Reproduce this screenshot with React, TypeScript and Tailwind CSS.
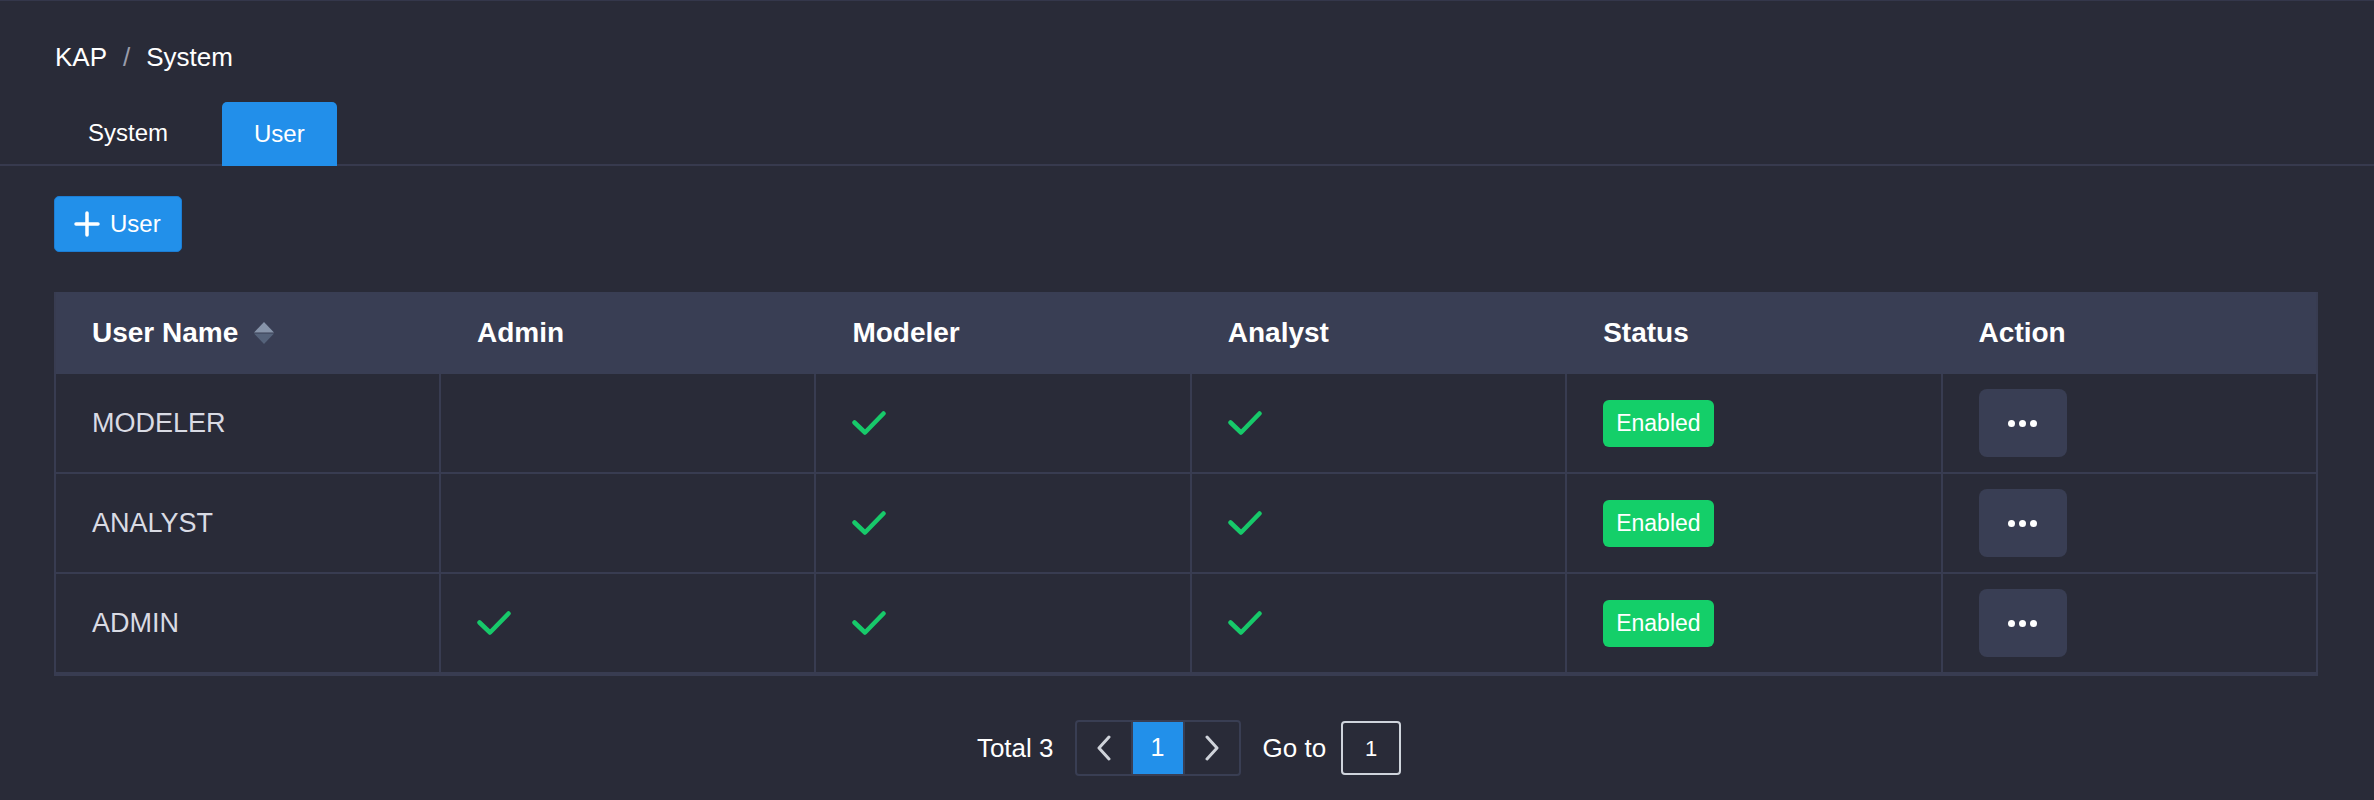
import React from "react";

const users = [
  { name: "MODELER", admin: false, modeler: true, analyst: true },
  { name: "ANALYST", admin: false, modeler: true, analyst: true },
  { name: "ADMIN", admin: true, modeler: true, analyst: true },
];

const columns = ["User Name", "Admin", "Modeler", "Analyst", "Status", "Action"];

const Check = () => (
  <svg width="34" height="24" viewBox="0 0 34 24" fill="none">
    <path
      d="M2.5 11.5 L13 21.5 L31.5 2.5"
      stroke="#17c96a"
      strokeWidth="4.5"
      strokeLinecap="round"
      strokeLinejoin="round"
    />
  </svg>
);

const SortIcon = () => (
  <svg width="20" height="22" viewBox="0 0 20 22" className="ml-[16px]">
    <path d="M10 0 L20 10.5 L0 10.5 Z" fill="#8794aa" />
    <path d="M0 11.5 L20 11.5 L10 22 Z" fill="#55627a" />
  </svg>
);

const Chevron = ({ dir }: { dir: "left" | "right" }) => (
  <svg width="14" height="26" viewBox="0 0 14 26" fill="none">
    <path
      d={dir === "left" ? "M12 2 L2 13 L12 24" : "M2 2 L12 13 L2 24"}
      stroke="#cfd3da"
      strokeWidth="3"
      strokeLinecap="round"
      strokeLinejoin="round"
    />
  </svg>
);

const App: React.FC = () => {
  return (
    <div
      className="min-h-screen bg-[#292b38] border-t border-[#34374b] text-white"
      style={{ fontFamily: '"Liberation Sans", Arial, sans-serif' }}
    >
      {/* breadcrumb */}
      <div className="pt-[41px] pl-[55px] flex items-center text-[26px] leading-[30px]">
        <span>KAP</span>
        <span className="mx-[16px] text-[#9a9caa]">/</span>
        <span>System</span>
      </div>

      {/* tabs */}
      <div className="mt-[30px] h-[64px] flex gap-[21px] pl-[55px] border-b-2 border-[#373a4e]">
        <div className="px-[33px] flex items-center text-[24px]">System</div>
        <div className="px-[32px] flex items-center text-[24px] bg-[#228fea] rounded-t-[5px] -mb-[2px]">
          User
        </div>
      </div>

      <div className="pl-[54px] pr-[56px]">
        <button className="mt-[30px] h-[56px] w-[128px] flex items-center pl-[19px] bg-[#2290ea] border border-[#1c7dd4] rounded-[5px] text-[24px] text-white">
          <svg width="26" height="26" viewBox="0 0 26 26" fill="none">
            <path d="M13 2 V24 M2 13 H24" stroke="#fff" strokeWidth="3.5" strokeLinecap="round" />
          </svg>
          <span className="ml-[10px]">User</span>
        </button>

        {/* table */}
        <div className="mt-[40px] border-2 border-t-0 border-[#383c51]">
          <div className="grid grid-cols-[383px_1fr_1fr_1fr_1fr_1fr] h-[82px] bg-[#393e54]">
            {columns.map((c, i) => (
              <div
                key={c}
                className={
                  "flex items-center pl-[36px] text-[28px] font-bold text-white " +
                  (i > 0 ? "border-l-2 border-transparent" : "")
                }
              >
                {c}
                {i === 0 && <SortIcon />}
              </div>
            ))}
          </div>
          {users.map((u) => (
            <div
              key={u.name}
              className="grid grid-cols-[383px_1fr_1fr_1fr_1fr_1fr] h-[100px] border-b-2 border-[#383c51]"
            >
              <div className="flex items-center pl-[36px] text-[27px] text-[#d9dbe4]">{u.name}</div>
              <div className="flex items-center pl-[36px] border-l-2 border-[#383c51]">
                {u.admin && <Check />}
              </div>
              <div className="flex items-center pl-[36px] border-l-2 border-[#383c51]">
                {u.modeler && <Check />}
              </div>
              <div className="flex items-center pl-[36px] border-l-2 border-[#383c51]">
                {u.analyst && <Check />}
              </div>
              <div className="flex items-center pl-[36px] border-l-2 border-[#383c51]">
                <span className="h-[47px] px-[13px] flex items-center rounded-[6px] bg-[#14cf69] text-[23px] text-white">
                  Enabled
                </span>
              </div>
              <div className="flex items-center pl-[36px] border-l-2 border-[#383c51]">
                <button className="w-[88px] h-[68px] rounded-[8px] bg-[#393e54] flex items-center justify-center gap-[4px]">
                  <span className="w-[7px] h-[7px] rounded-full bg-white" />
                  <span className="w-[7px] h-[7px] rounded-full bg-white" />
                  <span className="w-[7px] h-[7px] rounded-full bg-white" />
                </button>
              </div>
            </div>
          ))}
        </div>

        {/* pagination */}
        <div className="mt-[44px] pl-[6px] flex items-center justify-center h-[56px]">
          <span className="text-[26px] text-white">Total 3</span>
          <div className="ml-[21px] h-[56px] flex border-2 border-[#393e53] rounded-[4px]">
            <div className="w-[54px] flex items-center justify-center">
              <Chevron dir="left" />
            </div>
            <div className="w-[54px] flex items-center justify-center bg-[#2290ea] border-x-2 border-[#393e53] text-[25px]">
              1
            </div>
            <div className="w-[54px] flex items-center justify-center">
              <Chevron dir="right" />
            </div>
          </div>
          <span className="ml-[22px] text-[26px] text-white">Go to</span>
          <div className="ml-[15px] w-[60px] h-[54px] flex items-center justify-center border-2 border-[#cfd4dc] rounded-[4px] text-[22px]">
            1
          </div>
        </div>
      </div>
    </div>
  );
};

export default App;
